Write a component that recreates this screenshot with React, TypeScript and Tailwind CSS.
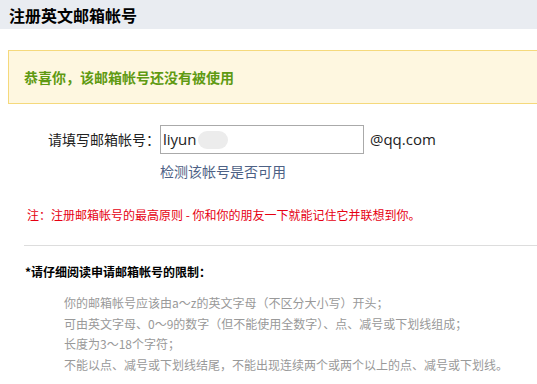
import type { FC } from 'react';

const RULES = [
  '你的邮箱帐号应该由a～z的英文字母（不区分大小写）开头；',
  '可由英文字母、0～9的数字（但不能使用全数字）、点、减号或下划线组成；',
  '长度为3～18个字符；',
  '不能以点、减号或下划线结尾，不能出现连续两个或两个以上的点、减号或下划线。',
];

const App: FC = () => {
  return (
    <div className="w-[537px] h-[384px] overflow-hidden bg-white text-[#333] font-['Noto_Sans_CJK_SC',sans-serif]">
      <div className="h-[29px] bg-[#e9ecf1] pl-[9px] flex items-center text-[16px] font-bold text-black">
        注册英文邮箱帐号
      </div>

      <div className="mt-[21px] ml-[8px] h-[54px] border border-r-0 border-[#f5d97c] bg-[#fef7e0] pl-[15px] flex items-center text-[14px] font-bold text-[#5f9a12]">
        恭喜你，该邮箱帐号还没有被使用
      </div>

      <div className="mt-[21px] flex items-center">
        <label htmlFor="email" className="w-[160px] text-right text-[14px] text-[#222]">
          请填写邮箱帐号：
        </label>
        <div className="w-[204px] h-[29px] border border-[#aaa] flex items-center pl-[2px]">
          <span id="email" className="text-[15px] text-[#222] font-['Open_Sans',sans-serif]">liyun</span>
          <span className="ml-[1px] w-[30px] h-[18px] rounded-full bg-[#ececec]" />
        </div>
        <span className="ml-[6px] text-[15px] text-[#222] font-['Open_Sans',sans-serif]">@qq.com</span>
      </div>

      <div className="mt-[7px] ml-[160px] text-[14px] leading-[20px] text-[#4d6185]">
        检测该帐号是否可用
      </div>

      <div className="mt-[25px] pl-[27px] text-[12px] leading-[18px] text-[#e60012]">
        注：注册邮箱帐号的最高原则 - 你和你的朋友一下就能记住它并联想到你。
      </div>

      <div className="mt-[21px] ml-[24px] border-t border-[#dddddd]" />

      <div className="mt-[17px] pl-[25px] text-[12px] leading-[18px] font-bold text-black">
        *请仔细阅读申请邮箱帐号的限制：
      </div>

      <ul className="mt-[12px] pl-[64px] text-[12px] leading-[20.5px] text-[#999]">
        {RULES.map((r) => (
          <li key={r}>{r}</li>
        ))}
      </ul>
    </div>
  );
};

export default App;
